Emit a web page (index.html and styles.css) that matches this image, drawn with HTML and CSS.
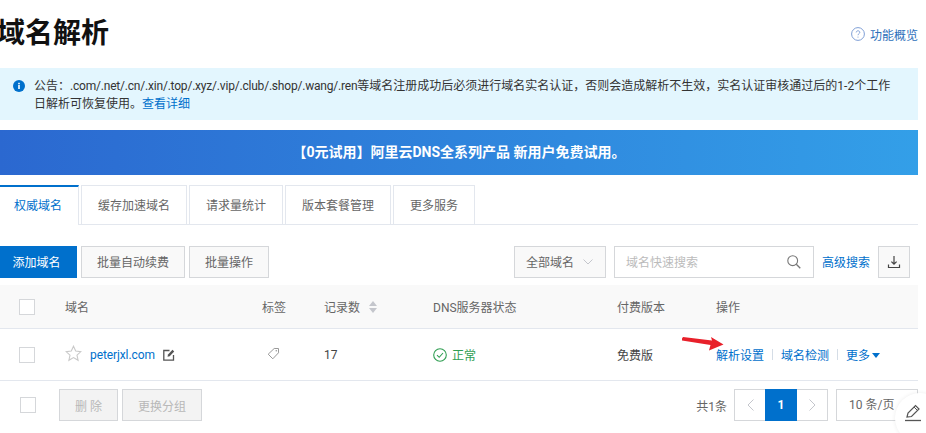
FILE: index.html
```html
<!DOCTYPE html>
<html lang="zh-CN">
<head>
  <meta charset="UTF-8" />
  <title>域名解析</title>
  <link rel="stylesheet" href="styles.css">
</head>
<body>
  <div class="page">
    <div class="page-head">
      <h1>域名解析</h1>
      <a class="overview">
        <svg width="14" height="14" viewBox="0 0 14 14"><circle cx="7" cy="7" r="6.4" fill="none" stroke="#7f9fd6"/><path d="M5.2 5.4c.1-1 .9-1.6 1.8-1.6s1.8.6 1.8 1.5c0 1.4-1.8 1.4-1.8 2.9" fill="none" stroke="#7f9fd6"/><circle cx="7" cy="10" r=".6" fill="#7f9fd6"/></svg>
        功能概览
      </a>
    </div>

    <div class="notice">
      <svg class="notice-icon" width="12" height="12" viewBox="0 0 12 12"><circle cx="6" cy="6" r="6" fill="#0070cc"/><rect x="5.2" y="5" width="1.6" height="4" fill="#fff"/><rect x="5.2" y="2.8" width="1.6" height="1.5" fill="#fff"/></svg>
      <p>公告：<span class="tlds">.com/.net/.cn/.xin/.top/.xyz/.vip/.club/.shop/.wang/.ren</span>等域名注册成功后必须进行域名实名认证，否则会造成解析不生效，实名认证审核通过后的1-2个工作日解析可恢复使用。<a>查看详细</a></p>
    </div>

    <div class="banner">【0元试用】阿里云DNS全系列产品 新用户免费试用。</div>

    <div class="tabs">
      <div class="tab active">权威域名</div>
      <div class="tab">缓存加速域名</div>
      <div class="tab">请求量统计</div>
      <div class="tab">版本套餐管理</div>
      <div class="tab">更多服务</div>
    </div>

    <div class="toolbar">
      <button class="btn primary">添加域名</button>
      <button class="btn">批量自动续费</button>
      <button class="btn">批量操作</button>
      <div class="toolbar-right">
        <div class="select">全部域名
          <svg width="10" height="6" viewBox="0 0 10 6"><path d="M.5.5 5 5 9.5.5" fill="none" stroke="#c4c6cc"/></svg>
        </div>
        <div class="search">
          <span>域名快速搜索</span>
          <svg width="14" height="14" viewBox="0 0 14 14"><circle cx="5.7" cy="5.7" r="4.9" fill="none" stroke="#777" stroke-width="1.1"/><path d="M9.3 9.3 13.3 13.3" stroke="#777" stroke-width="1.3"/></svg>
        </div>
        <a class="adv">高级搜索</a>
        <div class="export">
          <svg width="14" height="14" viewBox="0 0 14 14"><path d="M7 1v8M4.4 6.6 7 9.2l2.6-2.6M1.5 9.5v3h11v-3" fill="none" stroke="#444" stroke-width="1.2"/></svg>
        </div>
      </div>
    </div>

    <div class="row row-head">
      <div><span class="check"></span></div>
      <div>域名</div>
      <div>标签</div>
      <div class="sort-cell">记录数
        <svg width="8" height="12" viewBox="0 0 8 12"><path d="M4 0 8 5H0zM4 12 0 7h8z" fill="#c4c6cc"/></svg>
      </div>
      <div>DNS服务器状态</div>
      <div>付费版本</div>
      <div>操作</div>
    </div>

    <div class="row row-body">
      <div><span class="check"></span></div>
      <div class="domain-cell">
        <svg width="17" height="17" viewBox="0 0 17 17"><path d="M8.5 1.2 10.7 6l5.2.6-3.9 3.5 1.1 5.2-4.6-2.7-4.6 2.700 1.100-5.200L1.100 6.600l5.200-.6z" fill="none" stroke="#c9c9c9" stroke-width="1.1"/></svg>
        <a>peterjxl.com</a>
        <svg width="12" height="12" viewBox="0 0 12 12"><path d="M6.500 1.500H.8v9.700h9.700V6" fill="none" stroke="#555" stroke-width="1.3"/><path d="M4.500 7.800 5 5.500 9.500.8l1.700 1.700L6.700 7.200z" fill="#555"/></svg>
      </div>
      <div class="tag-cell">
        <svg width="13" height="13" viewBox="0 0 13 13"><path d="M7.200 1.500h4.300v4.300L5.800 11.800 1.200 7.200z" fill="none" stroke="#999"/><circle cx="9.300" cy="3.700" r=".8" fill="#999"/></svg>
      </div>
      <div>17</div>
      <div class="status">
        <svg width="14" height="14" viewBox="0 0 14 14"><circle cx="7" cy="7" r="6.300" fill="none" stroke="#2f9e52" stroke-width="1.1"/><path d="M4 7.200 6.200 9.300 10 5" fill="none" stroke="#2f9e52" stroke-width="1.1"/></svg>
        正常
      </div>
      <div>免费版</div>
      <div class="ops"><a>解析设置</a><i></i><a>域名检测</a><i></i><a>更多</a><b class="caret"></b></div>
    </div>

    <div class="foot">
      <span class="check"></span>
      <button class="btn disabled del">删 除</button>
      <button class="btn disabled">更换分组</button>
      <div class="foot-right">
        <span class="count">共1条</span>
        <div class="pager">
          <span class="pg"><svg width="7" height="12" viewBox="0 0 7 12"><path d="M6.500.5 1 6l5.500 5.500" fill="none" stroke="#c4c6cc"/></svg></span>
          <span class="pg current">1</span>
          <span class="pg"><svg width="7" height="12" viewBox="0 0 7 12"><path d="M.5.5 6 6 .5 11.500" fill="none" stroke="#c4c6cc"/></svg></span>
        </div>
        <div class="page-size">10 条/页</div>
      </div>
    </div>
  </div>

  <!-- red arrow drawn on top of the screenshot -->
  <svg class="arrow" width="42" height="14" viewBox="0 0 42 14"><path d="M0 1.500 1 0 30 3.500 29 0 41.500 7.500 27 13.500 28.500 8 0 3.500z" fill="#e8202a"/></svg>

  <div class="pen">
    <svg width="20" height="20" viewBox="0 0 20 20"><path d="M4 14 5 10 12.500 2.500 16 6 8.500 13.500z" fill="none" stroke="#555" stroke-width="1.2"/><path d="M11 4 14.500 7.500" stroke="#555"/><path d="M2 17.500h16" stroke="#555" stroke-width="1.3"/></svg>
  </div>
</body>
</html>
```

FILE: styles.css
```css
html, body {
  margin: 0;
  padding: 0;
  height: 433px;
  overflow: hidden;
  background: #fff;
}
body {
  position: relative;
  font-family: Roboto, "Noto Sans CJK SC", sans-serif;
  font-size: 12px;
  color: #333;
}
a {
  color: #0070cc;
}
.page {
  width: 918px;
}

.page-head {
  height: 68px;
  display: flex;
  justify-content: space-between;
}
.page-head h1 {
  margin: 14px 0 0 -3px;
  font-size: 28px;
  line-height: 40px;
  font-weight: 700;
  color: #111;
}
.overview {
  margin-top: 25px;
  height: 18px;
  display: flex;
  align-items: center;
  gap: 5px;
  color: #2c6fba;
}

.notice {
  height: 52px;
  box-sizing: border-box;
  padding: 9px 24px 0 13px;
  background: #e3f6fe;
  display: flex;
  gap: 9px;
}
.notice-icon {
  margin-top: 3px;
  flex: none;
}
.notice p {
  margin: 0;
  line-height: 18px;
  color: #333;
}
.tlds {
  letter-spacing: -0.2px;
}

.banner {
  margin-top: 10px;
  height: 45px;
  line-height: 44px;
  text-align: center;
  font-size: 14px;
  font-weight: 700;
  color: #fff;
  background: linear-gradient(90deg, #2b68d0, #339fe8);
}

.tabs {
  margin-top: 10px;
  height: 40px;
  box-sizing: border-box;
  display: flex;
  gap: 2px;
  border-bottom: 1px solid #e3e7ee;
}
.tab {
  height: 39px;
  line-height: 40px;
  box-sizing: border-box;
  padding: 0 16px;
  border: 1px solid #e3e7ee;
  border-bottom: 0;
  color: #666;
}
.tab.active {
  height: 40px;
  padding: 0 16px 0 14px;
  border: 0;
  border-top: 2px solid #0070cc;
  border-right: 1px solid #e3e7ee;
  background: #fff;
  color: #0070cc;
  line-height: 38px;
}

.toolbar {
  margin-top: 20px;
  height: 33px;
  display: flex;
  align-items: center;
  gap: 4px;
}
.btn {
  height: 32px;
  padding: 0 15px;
  border: 1px solid #d5d7da;
  background: #f9f9f9;
  font: inherit;
  color: #666;
}
.btn.primary {
  width: 77px;
  padding: 0 4px 0 0;
  border-color: #0070cc;
  background: #0070cc;
  color: #fff;
}
.toolbar-right {
  margin-left: auto;
  display: flex;
  align-items: center;
}
.select {
  width: 92px;
  height: 32px;
  box-sizing: border-box;
  padding: 0 11px;
  border: 1px solid #d5d7da;
  background: #f9f9f9;
  display: flex;
  align-items: center;
  gap: 9px;
  color: #666;
  white-space: nowrap;
}
.search {
  margin-left: 8px;
  width: 200px;
  height: 32px;
  box-sizing: border-box;
  padding: 0 12px 0 11px;
  border: 1px solid #d5d7da;
  display: flex;
  align-items: center;
  justify-content: space-between;
  color: #bbb;
}
.adv {
  margin-left: 8px;
  color: #0070cc;
}
.export {
  margin: 0 8px 0 8px;
  width: 32px;
  height: 32px;
  box-sizing: border-box;
  border: 1px solid #d5d7da;
  background: #f9f9f9;
  display: flex;
  align-items: center;
  justify-content: center;
}

.check {
  display: block;
  width: 14px;
  height: 14px;
  border: 1px solid #d5d7da;
  background: #fff;
}
.row {
  display: grid;
  grid-template-columns: 65px 197px 62px 109px 184px 99px 1fr;
  align-items: center;
  box-sizing: border-box;
  border-bottom: 1px solid #e3e7ee;
}
.row .check {
  margin-left: 19px;
}
.row-head {
  margin-top: 7px;
  height: 44px;
  background: #f9f9f9;
  color: #666;
}
.row-body {
  height: 52px;
  color: #444;
}
.sort-cell {
  display: flex;
  align-items: center;
  gap: 9px;
}
.domain-cell {
  display: flex;
  align-items: center;
  gap: 8px;
}
.domain-cell a {
  letter-spacing: -0.1px;
}
.domain-cell svg:first-child {
  margin-top: -3px;
}
.tag-cell {
  padding-left: 5px;
}
.tag-cell svg {
  display: block;
  margin-top: -2px;
}
.status {
  display: flex;
  align-items: center;
  gap: 5px;
  color: #2f9e52;
}
.ops {
  display: flex;
  align-items: center;
}
.ops i {
  width: 1px;
  height: 11px;
  margin: 0 8px;
  background: #d5dde6;
}
.caret {
  margin: 1px 0 0 2px;
  width: 0;
  height: 0;
  border: 4px solid transparent;
  border-top: 5px solid #0070cc;
  border-bottom: 0;
}

.foot {
  height: 48px;
  display: flex;
  align-items: center;
  gap: 4px;
}
.foot > .check {
  margin: 0 19px 0 20px;
}
.btn.disabled {
  background: #f3f3f3;
  color: #b8b8b8;
}
.btn.del {
  width: 59px;
  padding: 0;
}
.foot-right {
  margin-left: auto;
  display: flex;
  align-items: center;
}
.count {
  margin-right: 7px;
  color: #666;
}
.pager {
  display: flex;
  border: 1px solid #d5d7da;
}
.pg {
  width: 30px;
  height: 30px;
  display: flex;
  align-items: center;
  justify-content: center;
}
.pg.current {
  width: 32px;
  height: 32px;
  margin: -1px 0;
  background: #0070cc;
  color: #fff;
  font-weight: 700;
}
.page-size {
  margin-left: 8px;
  width: 82px;
  height: 32px;
  line-height: 30px;
  box-sizing: border-box;
  padding-left: 12px;
  border: 1px solid #d5d7da;
  color: #666;
}

.arrow {
  position: absolute;
  left: 682px;
  top: 337px;
}
.pen {
  position: absolute;
  left: 895px;
  top: 393px;
  width: 50px;
  height: 50px;
  border-radius: 50%;
  background: #fff;
  box-shadow: 0 0 4px rgba(0, 0, 0, 0.08);
}
.pen svg {
  position: absolute;
  left: 8px;
  top: 10px;
}
```
